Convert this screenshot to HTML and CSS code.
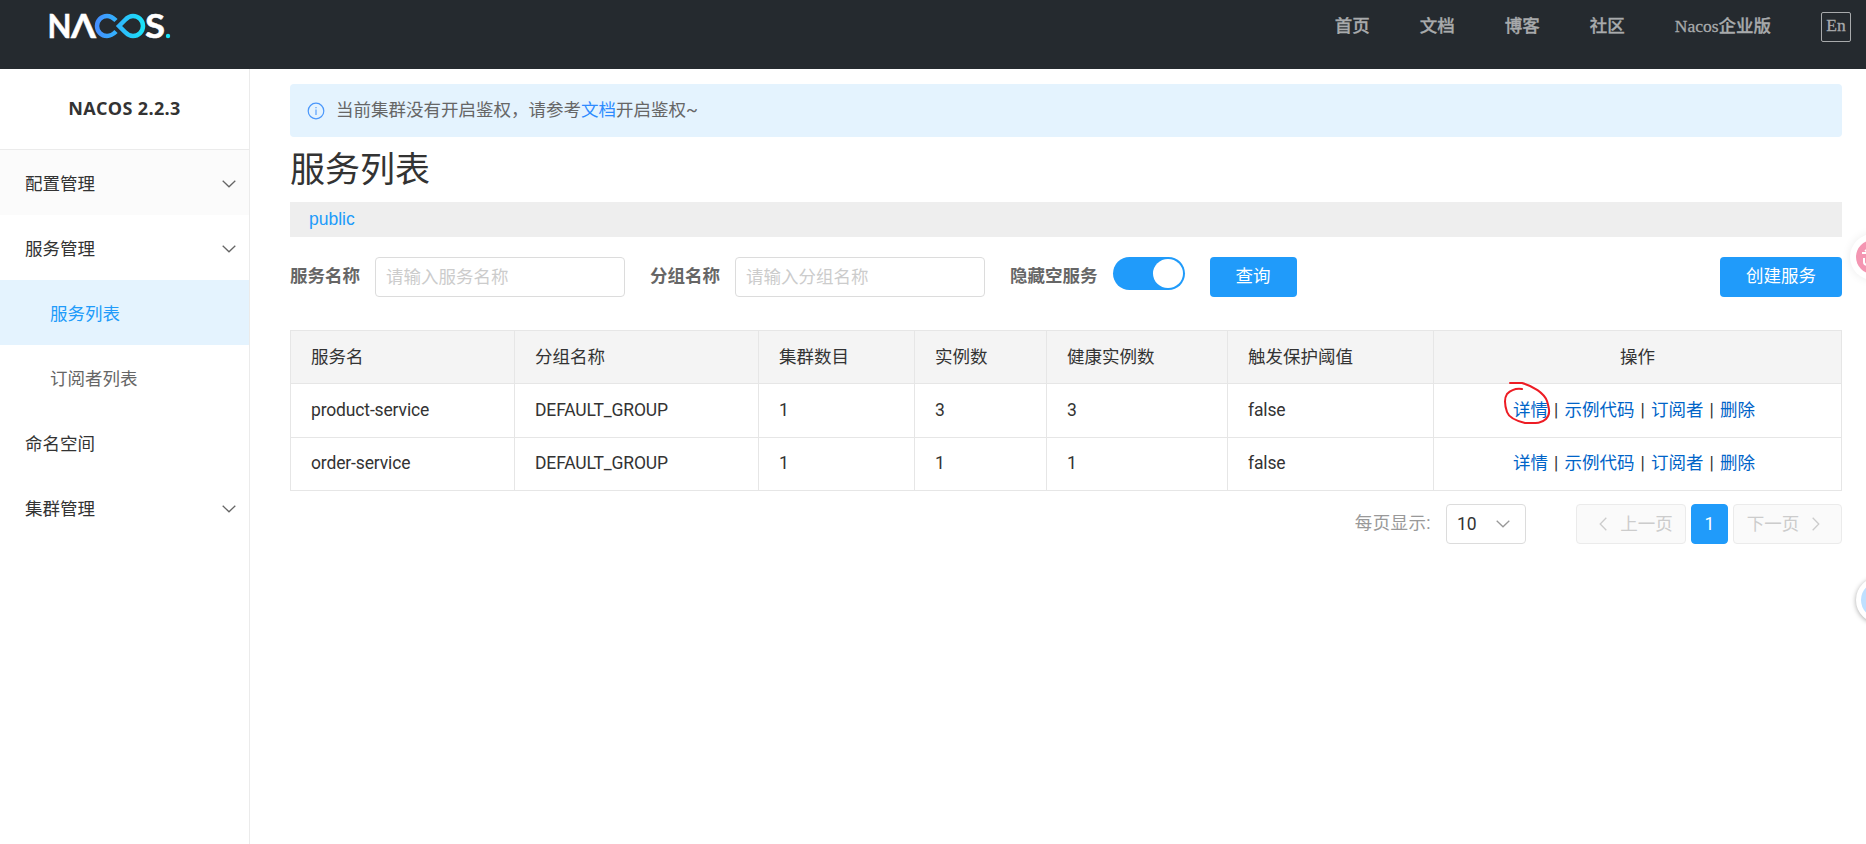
FILE: index.html
```
<!DOCTYPE html>
<html lang="zh-CN">
<head>
    <meta charset="UTF-8">
    <meta name="viewport" content="width=device-width, initial-scale=1.0">
    <title>Nacos</title>
    <link rel="stylesheet" href="styles.css">
</head>
<body>
    <header class="header">
        <svg class="logo" width="130" height="48" viewBox="-4 -11 130 48">
            <defs>
                <linearGradient id="loop" gradientUnits="userSpaceOnUse" x1="45" y1="0" x2="95" y2="0">
                    <stop offset="0" stop-color="#468cff"/>
                    <stop offset="1" stop-color="#18e4f8"/>
                </linearGradient>
            </defs>
            <text class="logo-text" x="-2.500" y="25" textLength="24" lengthAdjust="spacingAndGlyphs">N</text>
            <text class="logo-text" x="21" y="25" textLength="25" lengthAdjust="spacingAndGlyphs">Λ</text>
            <path d="M66 7.500C63 4.500 60 3 57 3a10 10 0 0 0 0 20c4 0 6.500-2 9-4.500M69 13l6-6c2.500-2.600 5-4 8-4a10 10 0 0 1 0 20c-3 0-5.500-1.400-8-4z" fill="none" stroke="url(#loop)" stroke-width="4.500"/>
            <text class="logo-text" x="95" y="25" textLength="20" lengthAdjust="spacingAndGlyphs">S</text>
            <circle cx="118" cy="23" r="2.200" fill="#18e4f8"/>
        </svg>
        <nav class="nav">
            <a>首页</a>
            <a>文档</a>
            <a>博客</a>
            <a>社区</a>
            <a>Nacos企业版</a>
            <span class="language">En</span>
        </nav>
    </header>

    <div class="layout">
        <aside class="sidebar">
            <div class="version">NACOS 2.2.3</div>
            <ul class="menu">
                <li class="menu-item hovered">配置管理
                    <svg class="arrow" width="14" height="8" viewBox="0 0 14 8"><path d="M.7.700 7 6.800 13.300.700"/></svg>
                </li>
                <li class="menu-item">服务管理
                    <svg class="arrow" width="14" height="8" viewBox="0 0 14 8"><path d="M.7.700 7 6.800 13.300.700"/></svg>
                </li>
                <li class="menu-item sub selected">服务列表</li>
                <li class="menu-item sub">订阅者列表</li>
                <li class="menu-item">命名空间</li>
                <li class="menu-item">集群管理
                    <svg class="arrow" width="14" height="8" viewBox="0 0 14 8"><path d="M.7.700 7 6.800 13.300.700"/></svg>
                </li>
            </ul>
        </aside>

        <main class="main">
            <div class="notice">
                <svg width="18" height="18" viewBox="0 0 18 18" fill="none" stroke="#4a97fb">
                    <circle cx="9" cy="9" r="7.800" stroke-width="1.200"/>
                    <path d="M9 5v1.200M9 7.500V13" stroke-width="1.100"/>
                </svg>
                <p>当前集群没有开启鉴权，请参考<a>文档</a>开启鉴权~</p>
            </div>
            <h1>服务列表</h1>
            <div class="namespace">public</div>

            <form class="filters">
                <label for="serviceName">服务名称</label>
                <input id="serviceName" type="text" placeholder="请输入服务名称">
                <label for="groupName">分组名称</label>
                <input id="groupName" type="text" placeholder="请输入分组名称">
                <label>隐藏空服务</label>
                <span class="switch"></span>
                <button type="button" class="button search">查询</button>
                <button type="button" class="button create">创建服务</button>
            </form>

            <table class="services">
                <colgroup>
                    <col class="col-name">
                    <col class="col-group">
                    <col class="col-cluster">
                    <col class="col-instance">
                    <col class="col-healthy">
                    <col class="col-threshold">
                    <col>
                </colgroup>
                <thead>
                    <tr>
                        <th>服务名</th>
                        <th>分组名称</th>
                        <th>集群数目</th>
                        <th>实例数</th>
                        <th>健康实例数</th>
                        <th>触发保护阈值</th>
                        <th class="actions">操作</th>
                    </tr>
                </thead>
                <tbody>
                    <tr>
                        <td>product-service</td>
                        <td>DEFAULT_GROUP</td>
                        <td>1</td>
                        <td>3</td>
                        <td>3</td>
                        <td>false</td>
                        <td class="actions">
                            <div class="links">
                                <span class="marked"><a>详情</a>
                                    <svg class="mark" width="50" height="46" viewBox="0 0 50 46"><path d="M7 3H19C30 6 41 13 44 21C46 28 48 34 43 39C38 44 31 43 22 43C14 41 6 38 4 32C1 23 2 17 4 14C8 10 13 8 19 9"/></svg>
                                </span><i>|</i><a>示例代码</a><i>|</i><a>订阅者</a><i>|</i><a>删除</a>
                            </div>
                        </td>
                    </tr>
                    <tr>
                        <td>order-service</td>
                        <td>DEFAULT_GROUP</td>
                        <td>1</td>
                        <td>1</td>
                        <td>1</td>
                        <td>false</td>
                        <td class="actions">
                            <div class="links">
                                <a>详情</a><i>|</i><a>示例代码</a><i>|</i><a>订阅者</a><i>|</i><a>删除</a>
                            </div>
                        </td>
                    </tr>
                </tbody>
            </table>

            <div class="pagination">
                <span class="page-label">每页显示:</span>
                <div class="page-size">10
                    <svg class="arrow" width="14" height="8" viewBox="0 0 14 8"><path d="M.7.700 7 6.800 13.300.700"/></svg>
                </div>
                <div class="page-button prev">
                    <svg class="arrow" width="8" height="14" viewBox="0 0 8 14"><path d="M7.300.700 1.200 7l6.100 6.300"/></svg>
                    上一页
                </div>
                <div class="page-button current">1</div>
                <div class="page-button next">
                    下一页
                    <svg class="arrow" width="8" height="14" viewBox="0 0 8 14"><path d="M.7.700 6.800 7 .7 13.300"/></svg>
                </div>
            </div>
        </main>
    </div>

    <div class="float-button pink">
        <svg width="34" height="34" viewBox="0 0 34 34"><path d="M6 13h10M9 11l3-2M8 18v4q0 3 4 3"/></svg>
    </div>
    <div class="float-button blue"></div>
</body>
</html>
```
FILE: styles.css
```
:root {
    --primary-color: #209bfa;
    --link-color: #0064c8;
    --text-color: #333;
    --border-color: #e6e6e6;
    --active-bg: #e4f3fe;
}

* {
    box-sizing: border-box;
}

body {
    margin: 0;
    height: 844px;
    overflow: hidden;
    position: relative;
    background: #fff;
    color: var(--text-color);
    font-family: Roboto, "Noto Sans CJK SC", sans-serif;
    font-size: 17.5px;
    line-height: 26px;
}

.header {
    height: 69px;
    padding: 2px 15px 0 46px;
    background: #252a2f;
    display: flex;
    justify-content: space-between;
    align-items: flex-start;
}

.logo-text {
    font-family: Lato, sans-serif;
    font-size: 33px;
    font-weight: 700;
    fill: #fff;
    stroke: #fff;
    stroke-width: 0.5px;
}

.nav {
    display: flex;
    align-items: flex-start;
    gap: 50px;
    margin-top: 10px;
    color: #a8aaac;
    font-family: "Liberation Serif", "Noto Sans CJK SC", serif;
    font-weight: 500;
    line-height: 29px;
    -webkit-text-stroke: 0.3px #a8aaac;
}

.language {
    width: 30px;
    height: 30px;
    border: 1px solid #a8aaac;
    border-radius: 2px;
    text-align: center;
    line-height: 24px;
}

.layout {
    display: flex;
    height: 775px;
}

.sidebar {
    width: 250px;
    border-right: 1px solid #ebebeb;
}

.version {
    height: 81px;
    border-bottom: 1px solid #ebebeb;
    font-family: "Open Sans", sans-serif;
    font-size: 18px;
    font-weight: 700;
    letter-spacing: 0.35px;
    line-height: 78px;
    text-align: center;
}

.menu {
    list-style: none;
    margin: 0;
    padding: 0;
}

.menu-item {
    height: 65px;
    padding: 3px 13px 0 25px;
    display: flex;
    align-items: center;
    justify-content: space-between;
}

.hovered {
    background: #fbfbfb;
}

.menu-item.sub {
    padding-left: 50px;
    color: #666;
}

.menu-item.selected {
    background: var(--active-bg);
    color: var(--primary-color);
}

.arrow {
    fill: none;
    stroke: #666;
    stroke-width: 1.3;
}

.main {
    flex: 1;
    padding: 15px 24px 0 40px;
}

.notice {
    height: 53px;
    padding: 0 17px;
    border-radius: 4px;
    background: var(--active-bg);
    color: #666;
    display: flex;
    align-items: center;
    gap: 11px;
}

.notice p {
    margin: 0 0 2px;
}

.notice a {
    color: #2e8bff;
}

h1 {
    height: 65px;
    margin: 0;
    font-size: 35px;
    font-weight: 400;
    line-height: 67px;
}

.namespace {
    height: 35px;
    padding-left: 19px;
    background: #eee;
    color: var(--primary-color);
    font-family: "Liberation Sans", sans-serif;
    line-height: 35px;
}

.filters {
    display: flex;
    height: 40px;
    margin: 20px 0 33px;
    align-items: flex-start;
}

.filters label {
    margin-right: 15px;
    color: #666;
    font-weight: 700;
    line-height: 39px;
}

.filters input {
    width: 250px;
    height: 40px;
    margin-right: 25px;
    padding: 0 10px 1px;
    border: 1px solid #dcdcdc;
    border-radius: 4px;
    font: inherit;
}

.filters input::placeholder {
    color: #ccc;
}

.switch {
    width: 72px;
    height: 33px;
    margin-right: 25px;
    padding: 2px;
    border-radius: 17px;
    background: var(--primary-color);
    display: flex;
    justify-content: flex-end;
}

.switch::after {
    content: "";
    width: 30px;
    height: 29px;
    border-radius: 50%;
    background: #fff;
}

.button {
    height: 40px;
    padding: 0 0 2px;
    border: 0;
    border-radius: 4px;
    background: var(--primary-color);
    color: #fff;
    font: inherit;
}

.search {
    width: 87px;
}

.create {
    width: 122px;
    margin-left: auto;
}

.services {
    width: 1552px;
    height: 161px;
    border-collapse: collapse;
    table-layout: fixed;
}

.col-name { width: 224px; }
.col-group { width: 244px; }
.col-cluster { width: 156px; }
.col-instance { width: 132px; }
.col-healthy { width: 181px; }
.col-threshold { width: 206px; }

.services th,
.services td {
    height: 53px;
    padding: 0 20px 1px;
    border: 1px solid var(--border-color);
    font-weight: 400;
    text-align: left;
}

.services td {
    letter-spacing: -0.15px;
}

.services th {
    background: #f4f4f4;
}

.services .actions {
    letter-spacing: 0;
    text-align: center;
}

.links {
    display: flex;
    justify-content: center;
    padding-right: 7px;
}

.links a {
    color: var(--link-color);
}

.links i {
    width: 16.5px;
    font-style: normal;
}

.marked {
    position: relative;
}

.mark {
    position: absolute;
    left: -10px;
    top: -17px;
    fill: none;
    stroke: #ed1c24;
    stroke-width: 2;
    stroke-linecap: round;
}

.pagination {
    display: flex;
    justify-content: flex-end;
    margin-top: 13px;
    line-height: 38px;
}

.page-label {
    margin-right: 15px;
    color: #999;
    letter-spacing: 0.4px;
}

.page-size {
    width: 80px;
    height: 40px;
    margin-right: 50px;
    padding: 0 15px 0 10px;
    border: 1px solid #dcdcdc;
    border-radius: 4px;
    display: flex;
    align-items: center;
    justify-content: space-between;
}

.page-size .arrow {
    stroke: #999;
}

.page-button {
    height: 40px;
    padding-bottom: 1px;
    border: 1px solid #ebebeb;
    border-radius: 4px;
    background: #fafafa;
    color: #ccc;
    display: flex;
    align-items: center;
    justify-content: center;
    gap: 13px;
}

.page-button .arrow {
    stroke: #ccc;
}

.prev {
    width: 110px;
    padding-left: 10px;
}

.current {
    width: 37px;
    margin: 0 5px;
    border-color: var(--primary-color);
    background: var(--primary-color);
    color: #fff;
}

.next {
    width: 109px;
    padding-right: 8px;
}

.float-button {
    position: absolute;
    border-radius: 50%;
    background: #fff;
}

.pink {
    left: 1850px;
    top: 234px;
    width: 46px;
    height: 46px;
    padding: 6px;
    box-shadow: 0 0 10px rgba(0, 0, 0, 0.08);
}

.pink svg {
    display: block;
    border-radius: 50%;
    background: #f496b2;
    fill: none;
    stroke: #fff;
    stroke-width: 2;
}

.blue {
    left: 1856px;
    top: 577px;
    width: 46px;
    height: 46px;
    border: 5px solid #fff;
    background: #bfe0ff;
    box-shadow: 0 1px 5px rgba(0, 0, 0, 0.35);
}
```
